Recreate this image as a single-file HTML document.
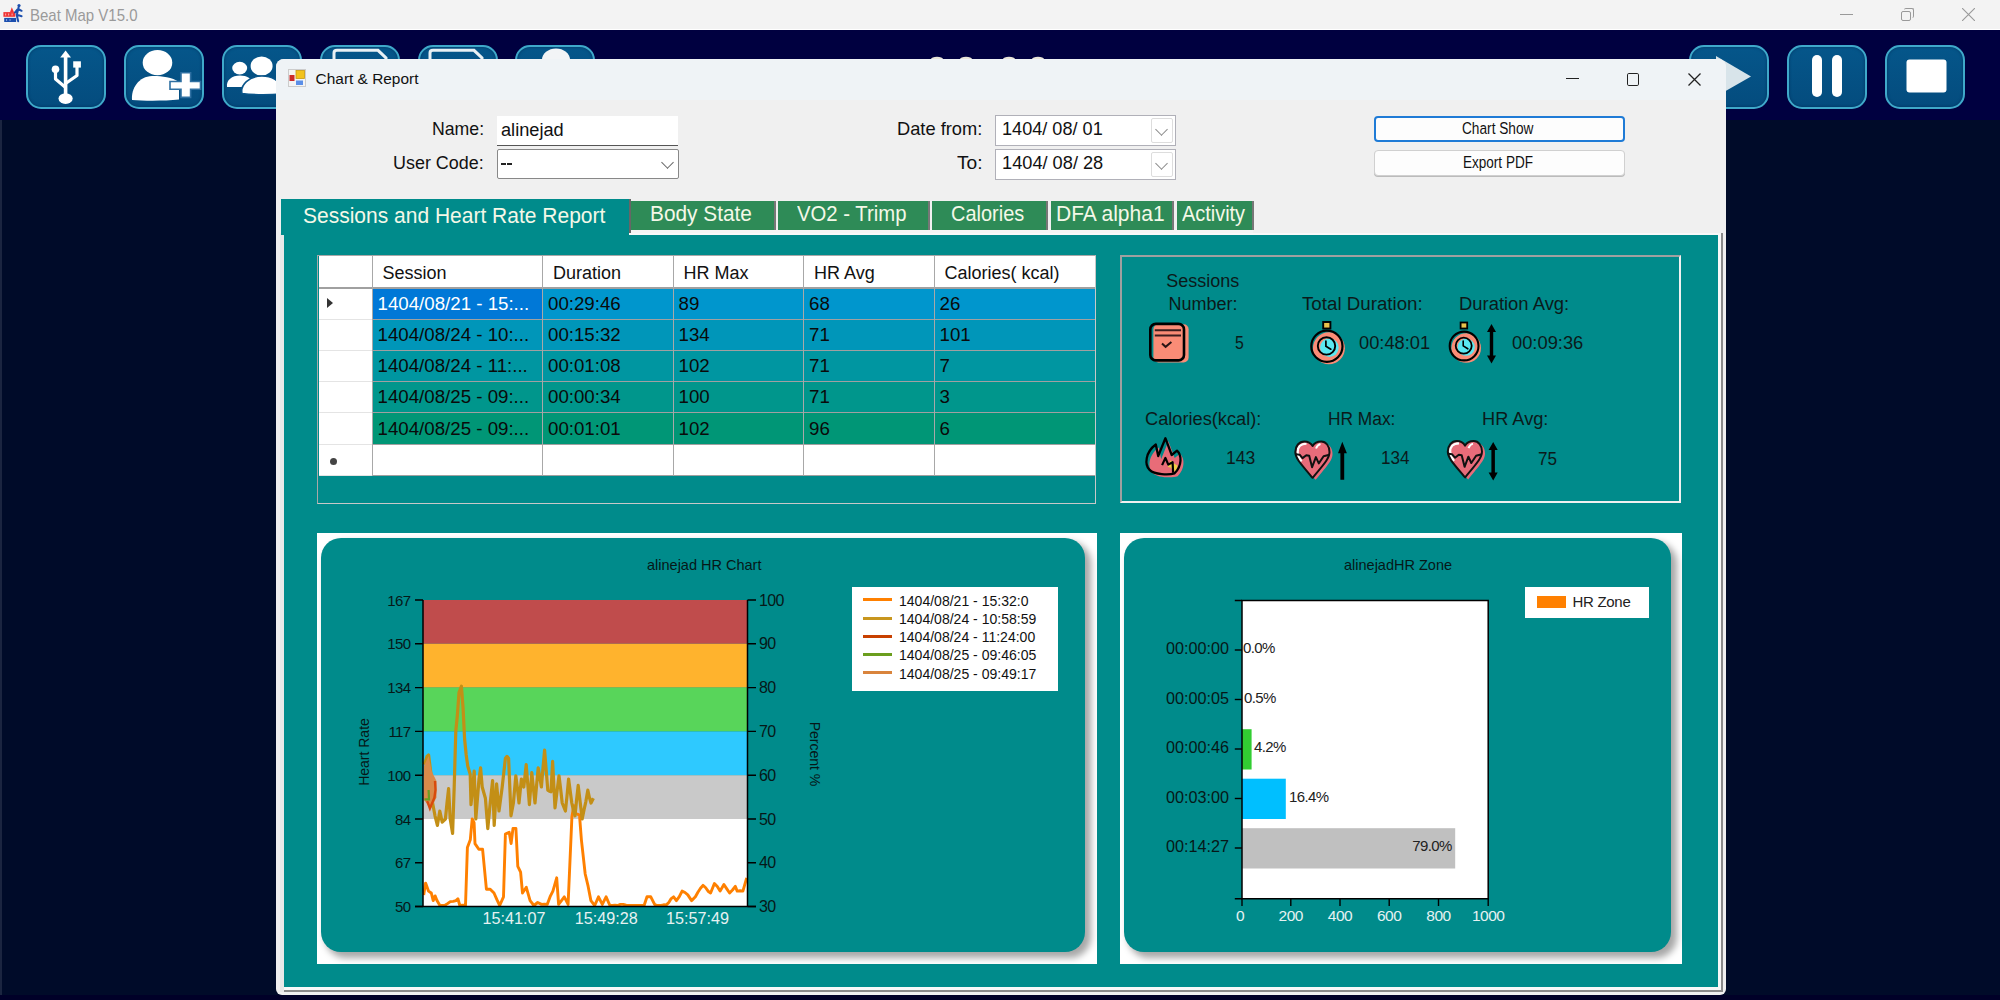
<!DOCTYPE html>
<html><head><meta charset="utf-8">
<style>
*{margin:0;padding:0;box-sizing:border-box}
html,body{width:2000px;height:1000px;overflow:hidden;background:#000b29;font-family:"Liberation Sans",sans-serif}
.a{position:absolute}
.t{position:absolute;white-space:nowrap;line-height:1}
.tb{position:absolute;top:45px;width:80px;height:64px;border:2.6px solid #3fa9ca;border-radius:15px;background:linear-gradient(#05568a,#044c7e);box-shadow:inset 0 0 3px rgba(0,20,60,0.5)}
.box{position:absolute;background:#fff;border:1px solid #b8b8b8}
.chev{position:absolute;width:9px;height:9px;border-right:1.5px solid #555;border-bottom:1.5px solid #555;transform:rotate(45deg)}
.tab{position:absolute;top:201px;height:29px;background:#2e8b57;border-right:2px solid #777}
</style></head><body>

<div class="a" style="left:0;top:0;width:2000px;height:30px;background:#f3f3f3"></div>
<div class="a" style="left:0;top:29px;width:2000px;height:1px;background:#fff"></div>
<div class="t" style="left:29.60px;top:7.14px;font-size:16.14px;color:#9a9a9a;transform:scaleX(0.9295);transform-origin:0 0;">Beat Map V15.0</div>
<svg class="a" style="left:0;top:0" width="26" height="28" viewBox="0 0 26 28">
<rect x="3.4" y="12.1" width="11.9" height="4.7" fill="#f03535"/>
<path d="M10 12.3L11.8 7.2L14 12.3Z" fill="#f03535"/>
<path d="M5 13.5h1.2v2h-1.2zM8 13.5h1.2v2h-1.2zM11.5 13.5h1.2v2h-1.2z" fill="#f6a0a0"/>
<rect x="4.2" y="17.9" width="11.9" height="4.1" fill="#1c4fae"/>
<path d="M6 19h1.1v2h-1.1zM9.5 19h1.1v2h-1.1z" fill="#7d9ad8"/>
<circle cx="19" cy="5.6" r="1.6" fill="#1c4fae"/>
<path d="M18.6 7.2L16.8 15M18.2 9L21.6 10.8M16.8 14.6L21.6 16.2M16.6 14.6L18.2 21.2M17.5 9.5L15 12.5" stroke="#1c4fae" stroke-width="2" fill="none" stroke-linecap="round"/>
</svg>
<div class="a" style="left:1840px;top:14px;width:13px;height:1px;background:#999"></div>
<div class="a" style="left:1901px;top:11px;width:10px;height:10px;border:1px solid #999;border-radius:2px"></div>
<div class="a" style="left:1904px;top:8px;width:10px;height:10px;border-top:1px solid #999;border-right:1px solid #999;border-radius:2px"></div>
<svg class="a" style="left:1962px;top:8px" width="13" height="13"><path d="M0 0L13 13M13 0L0 13" stroke="#999" stroke-width="1.1"/></svg>
<div class="a" style="left:0;top:30px;width:2000px;height:90px;background:#000040"></div>
<div class="a" style="left:0;top:120px;width:1.6px;height:880px;background:#1b2540"></div>
<div class="a" style="left:0;top:995px;width:2000px;height:5px;background:#000028"></div>
<div class="tb" style="left:26px"></div>
<div class="tb" style="left:124px"></div>
<div class="tb" style="left:222px"></div>
<div class="tb" style="left:320px"></div>
<div class="tb" style="left:418px"></div>
<div class="tb" style="left:515px"></div>
<div class="tb" style="left:1689px"></div>
<div class="tb" style="left:1787px"></div>
<div class="tb" style="left:1885px"></div>
<svg class="a" style="left:0;top:30px" width="2000" height="90" viewBox="0 30 2000 90">
<g fill="#fff" stroke="#fff">
<path d="M65.6 50.5L71 57.5H60.2Z" stroke="none"/>
<path d="M65.6 56V97" stroke-width="3.6" fill="none"/>
<ellipse cx="65.6" cy="98.6" rx="7.1" ry="5.3" stroke="none"/>
<circle cx="55.5" cy="69.2" r="3.8" stroke="none"/>
<path d="M55.5 70V79L65.6 87.5" stroke-width="3.2" fill="none" stroke-linejoin="round"/>
<rect x="73.2" y="61.3" width="7.7" height="6.3" stroke="none"/>
<path d="M77 66V75.5L65.6 83.5" stroke-width="3.2" fill="none" stroke-linejoin="round"/>
<ellipse cx="157.5" cy="62.7" rx="14.8" ry="12.6" stroke="none"/>
<path d="M132 100C131 88 139 76.5 152 76C160 75.8 172 77 179 82V99.5C165 101 145 101 132 100Z" stroke="none"/>
<ellipse cx="239.7" cy="68.1" rx="7.5" ry="6.3" stroke="none"/>
<path d="M227 87C226 80 232 75.5 240 75.5C247 75.5 252 79 253 83L252 87Z" stroke="none"/>
<ellipse cx="261.6" cy="66" rx="11" ry="9.6" stroke="none"/>
<path d="M242 93.5C240 85 249 76 262 76C272 76 280 81 282 88V94C268 95 254 95 242 93.5Z" stroke="#0a558a" stroke-width="1.6"/>
</g>
<path d="M170.8 82.3H181.8V73.6H189.8V82.3H199.7V88.4H189.8V96.6H181.8V88.4H170.8Z" fill="#fff" stroke="#2f70a2" stroke-width="3.2" paint-order="stroke"/>
<path d="M334 60V53C334 51 335 50.3 337 50.3H378L386 58V60" fill="none" stroke="#e8f0f4" stroke-width="3"/>
<path d="M430 60V53C430 51 431 50.3 433 50.3H474L482 58V60" fill="none" stroke="#e8f0f4" stroke-width="3"/>
<ellipse cx="556" cy="60" rx="14" ry="11.5" fill="#f2f4f6"/>
<path d="M1716 56L1751 76.4L1716 96.5Z" fill="#d8e4ea"/>
<rect x="1812" y="55" width="10" height="42" rx="5" fill="#fff"/>
<rect x="1832" y="55" width="10" height="42" rx="5" fill="#fff"/>
<rect x="1906.5" y="59.5" width="40" height="33" rx="3" fill="#fff"/>
<ellipse cx="937" cy="59" rx="6" ry="2.2" fill="#e8e4d8"/>
<ellipse cx="966" cy="59" rx="6" ry="2.2" fill="#e8e4d8"/>
<ellipse cx="1009" cy="59" rx="6" ry="2.2" fill="#e8e4d8"/>
<ellipse cx="1038" cy="59" rx="6" ry="2.2" fill="#e8e4d8"/>
</svg>
<div class="a" style="left:276px;top:59px;width:1450px;height:936px;background:#f0f0f0;border-radius:8px 8px 6px 6px"></div>
<div class="a" style="left:276px;top:59px;width:1450px;height:40.5px;background:#eff3f6;border-radius:8px 8px 0 0"></div>
<svg class="a" style="left:288px;top:69px" width="18" height="18" viewBox="0 0 18 18">
<rect x="0.5" y="0.5" width="17" height="17" fill="#f4f4f4" stroke="#ccc"/>
<rect x="8" y="1.5" width="8.5" height="8" fill="#f2c21c" stroke="#c99a10" stroke-width="0.8"/>
<rect x="1.5" y="6" width="5" height="6" fill="#cc2a2a"/>
<rect x="8" y="11.5" width="7" height="4.5" fill="#5b8fe8"/>
</svg>
<div class="t" style="left:315.60px;top:71.34px;font-size:15.43px;color:#111;">Chart &amp; Report</div>
<div class="a" style="left:1566px;top:78px;width:13px;height:1.2px;background:#222"></div>
<div class="a" style="left:1627px;top:73px;width:12.3px;height:12.5px;border:1.4px solid #222;border-radius:1.8px"></div>
<svg class="a" style="left:1688px;top:73px" width="13" height="13"><path d="M0.5 0.5L12.5 12.5M12.5 0.5L0.5 12.5" stroke="#222" stroke-width="1.3"/></svg>
<div class="t" style="left:432.00px;top:120.60px;font-size:17.71px;color:#111;">Name:</div>
<div class="box" style="left:497px;top:116px;width:181px;height:30px;border:none;border-bottom:1.5px solid #555"></div>
<div class="t" style="left:501.00px;top:120.56px;font-size:18.00px;color:#111;transform:scaleX(1.0105);transform-origin:0 0;">alinejad</div>
<div class="t" style="left:393.20px;top:153.80px;font-size:18.43px;color:#111;transform:scaleX(0.9741);transform-origin:0 0;">User Code:</div>
<div class="box" style="left:497px;top:149px;width:182px;height:30px;border:1.5px solid #888;border-radius:2px"></div>
<div class="a" style="left:501px;top:163px;width:5px;height:1.8px;background:#222"></div>
<div class="a" style="left:507px;top:163px;width:5px;height:1.8px;background:#222"></div>
<div class="chev" style="left:663px;top:157.5px;border-color:#666"></div>
<div class="t" style="left:897.00px;top:120.28px;font-size:18.57px;color:#111;transform:scaleX(0.9839);transform-origin:0 0;">Date from:</div>
<div class="t" style="left:956.70px;top:153.58px;font-size:18.57px;color:#111;transform:scaleX(1.0333);transform-origin:0 0;">To:</div>
<div class="box" style="left:995px;top:115px;width:181px;height:31px;border:1.5px solid #b0b0b8"></div>
<div class="box" style="left:1151px;top:118px;width:22px;height:25px;border:1px solid #ddd;border-radius:2px"></div>
<div class="chev" style="left:1156.5px;top:124.5px;width:9px;height:9px;border-color:#8a8a8a;border-width:0 1.7px 1.7px 0"></div>
<div class="t" style="left:1001.70px;top:120.28px;font-size:18.57px;color:#111;transform:scaleX(0.9760);transform-origin:0 0;">1404/ 08/ 01</div>
<div class="box" style="left:995px;top:149px;width:181px;height:31px;border:1.5px solid #b0b0b8"></div>
<div class="box" style="left:1151px;top:152px;width:22px;height:25px;border:1px solid #ddd;border-radius:2px"></div>
<div class="chev" style="left:1156.5px;top:158.5px;width:9px;height:9px;border-color:#8a8a8a;border-width:0 1.7px 1.7px 0"></div>
<div class="t" style="left:1001.70px;top:154.08px;font-size:18.57px;color:#111;transform:scaleX(0.9809);transform-origin:0 0;">1404/ 08/ 28</div>
<div class="box" style="left:1374px;top:116px;width:251px;height:26px;border:2px solid #1f7bd6;border-radius:4px;background:#fdfdfd"></div>
<div class="t" style="left:1462.20px;top:120.49px;font-size:16.43px;color:#111;transform:scaleX(0.8326);transform-origin:0 0;">Chart Show</div>
<div class="box" style="left:1374px;top:150px;width:251px;height:26px;border:1px solid #d0d0d0;border-radius:4px;background:#fdfdfd;box-shadow:0 1px 0 #bbb"></div>
<div class="t" style="left:1463.00px;top:153.69px;font-size:16.43px;color:#111;transform:scaleX(0.8245);transform-origin:0 0;">Export PDF</div>
<div class="a" style="left:629px;top:199px;width:2px;height:34px;background:#666"></div>
<div class="a" style="left:631px;top:229px;width:622px;height:5px;background:#f4f4f4"></div>
<div class="tab" style="left:631px;width:145px"></div>
<div class="t" style="left:650.40px;top:203.42px;font-size:21.71px;color:#f4f8e8;transform:scaleX(0.9602);transform-origin:0 0;">Body State</div>
<div class="tab" style="left:778px;width:152px"></div>
<div class="t" style="left:797.00px;top:203.42px;font-size:21.71px;color:#f4f8e8;transform:scaleX(0.9356);transform-origin:0 0;">VO2 - Trimp</div>
<div class="tab" style="left:932px;width:116px"></div>
<div class="t" style="left:951.20px;top:203.42px;font-size:21.71px;color:#f4f8e8;transform:scaleX(0.9203);transform-origin:0 0;">Calories</div>
<div class="tab" style="left:1051px;width:123px"></div>
<div class="t" style="left:1055.70px;top:203.42px;font-size:21.71px;color:#f4f8e8;transform:scaleX(0.9674);transform-origin:0 0;">DFA alpha1</div>
<div class="tab" style="left:1177px;width:77px"></div>
<div class="t" style="left:1181.80px;top:203.42px;font-size:21.71px;color:#f4f8e8;transform:scaleX(0.9176);transform-origin:0 0;">Activity</div>
<div class="a" style="left:280px;top:233px;width:1443px;height:759px;background:#f8f8f8;border-right:2px solid #8a8a8a;border-bottom:2.5px solid #8a8a8a"></div>
<div class="a" style="left:280px;top:233px;width:4px;height:759px;background:#e8e8e8"></div>
<div class="a" style="left:284px;top:234.8px;width:1434px;height:752.2px;background:#008b8b"></div>
<div class="a" style="left:281.2px;top:199.4px;width:348px;height:36px;background:#008b8b"></div>
<div class="t" style="left:303.00px;top:204.62px;font-size:21.71px;color:#f4f8e8;transform:scaleX(0.9676);transform-origin:0 0;">Sessions and Heart Rate Report</div>
<div class="a" style="left:317px;top:254.5px;width:779px;height:249px;border:1.5px solid #a8a8a8;border-right-color:#c8c8c8;border-bottom-color:#c8c8c8"></div>
<div class="a" style="left:319px;top:256px;width:776px;height:219.5px;background:#fff"></div>
<div class="a" style="left:372px;top:288px;width:723px;height:31.2px;background:#0096cd"></div>
<div class="a" style="left:372px;top:288px;width:170.5px;height:31.2px;background:#0078d7"></div>
<div class="a" style="left:372px;top:319.2px;width:723px;height:31.2px;background:#0096b9"></div>
<div class="a" style="left:372px;top:350.4px;width:723px;height:31.2px;background:#0096a1"></div>
<div class="a" style="left:372px;top:381.6px;width:723px;height:31.2px;background:#00968c"></div>
<div class="a" style="left:372px;top:412.8px;width:723px;height:31.2px;background:#009676"></div>
<div class="a" style="left:319px;top:287px;width:776px;height:1.5px;background:#a0a0a0"></div>
<div class="a" style="left:319px;top:318.7px;width:53px;height:1px;background:#e4e4e4"></div>
<div class="a" style="left:372px;top:318.7px;width:723px;height:1.2px;background:#a0a0a0"></div>
<div class="a" style="left:319px;top:349.9px;width:53px;height:1px;background:#e4e4e4"></div>
<div class="a" style="left:372px;top:349.9px;width:723px;height:1.2px;background:#a0a0a0"></div>
<div class="a" style="left:319px;top:381.1px;width:53px;height:1px;background:#e4e4e4"></div>
<div class="a" style="left:372px;top:381.1px;width:723px;height:1.2px;background:#a0a0a0"></div>
<div class="a" style="left:319px;top:412.3px;width:53px;height:1px;background:#e4e4e4"></div>
<div class="a" style="left:372px;top:412.3px;width:723px;height:1.2px;background:#a0a0a0"></div>
<div class="a" style="left:319px;top:443.5px;width:53px;height:1px;background:#e4e4e4"></div>
<div class="a" style="left:372px;top:443.5px;width:723px;height:1.2px;background:#a0a0a0"></div>
<div class="a" style="left:319px;top:475.0px;width:53px;height:1px;background:#e4e4e4"></div>
<div class="a" style="left:372px;top:475.0px;width:723px;height:1.2px;background:#a0a0a0"></div>
<div class="a" style="left:371.5px;top:256px;width:1.3px;height:219.5px;background:#a8a8a8"></div>
<div class="a" style="left:542.0px;top:256px;width:1.3px;height:219.5px;background:#a8a8a8"></div>
<div class="a" style="left:672.5px;top:256px;width:1.3px;height:219.5px;background:#a8a8a8"></div>
<div class="a" style="left:803.0px;top:256px;width:1.3px;height:219.5px;background:#a8a8a8"></div>
<div class="a" style="left:933.5px;top:256px;width:1.3px;height:219.5px;background:#a8a8a8"></div>
<div class="t" style="left:382.50px;top:264.26px;font-size:18.00px;color:#111;">Session</div>
<div class="t" style="left:553.00px;top:264.26px;font-size:18.00px;color:#111;">Duration</div>
<div class="t" style="left:683.50px;top:264.26px;font-size:18.00px;color:#111;">HR Max</div>
<div class="t" style="left:814.00px;top:264.26px;font-size:18.00px;color:#111;">HR Avg</div>
<div class="t" style="left:944.50px;top:264.26px;font-size:18.00px;color:#111;">Calories( kcal)</div>
<div class="t" style="left:377.50px;top:294.77px;font-size:18.70px;color:#fff;">1404/08/21 - 15:...</div>
<div class="t" style="left:548.00px;top:294.77px;font-size:18.70px;color:#0a0a0a;">00:29:46</div>
<div class="t" style="left:678.50px;top:294.77px;font-size:18.70px;color:#0a0a0a;">89</div>
<div class="t" style="left:809.00px;top:294.77px;font-size:18.70px;color:#0a0a0a;">68</div>
<div class="t" style="left:939.50px;top:294.77px;font-size:18.70px;color:#0a0a0a;">26</div>
<div class="t" style="left:377.50px;top:325.97px;font-size:18.70px;color:#0a0a0a;">1404/08/24 - 10:...</div>
<div class="t" style="left:548.00px;top:325.97px;font-size:18.70px;color:#0a0a0a;">00:15:32</div>
<div class="t" style="left:678.50px;top:325.97px;font-size:18.70px;color:#0a0a0a;">134</div>
<div class="t" style="left:809.00px;top:325.97px;font-size:18.70px;color:#0a0a0a;">71</div>
<div class="t" style="left:939.50px;top:325.97px;font-size:18.70px;color:#0a0a0a;">101</div>
<div class="t" style="left:377.50px;top:357.17px;font-size:18.70px;color:#0a0a0a;">1404/08/24 - 11:...</div>
<div class="t" style="left:548.00px;top:357.17px;font-size:18.70px;color:#0a0a0a;">00:01:08</div>
<div class="t" style="left:678.50px;top:357.17px;font-size:18.70px;color:#0a0a0a;">102</div>
<div class="t" style="left:809.00px;top:357.17px;font-size:18.70px;color:#0a0a0a;">71</div>
<div class="t" style="left:939.50px;top:357.17px;font-size:18.70px;color:#0a0a0a;">7</div>
<div class="t" style="left:377.50px;top:388.37px;font-size:18.70px;color:#0a0a0a;">1404/08/25 - 09:...</div>
<div class="t" style="left:548.00px;top:388.37px;font-size:18.70px;color:#0a0a0a;">00:00:34</div>
<div class="t" style="left:678.50px;top:388.37px;font-size:18.70px;color:#0a0a0a;">100</div>
<div class="t" style="left:809.00px;top:388.37px;font-size:18.70px;color:#0a0a0a;">71</div>
<div class="t" style="left:939.50px;top:388.37px;font-size:18.70px;color:#0a0a0a;">3</div>
<div class="t" style="left:377.50px;top:419.57px;font-size:18.70px;color:#0a0a0a;">1404/08/25 - 09:...</div>
<div class="t" style="left:548.00px;top:419.57px;font-size:18.70px;color:#0a0a0a;">00:01:01</div>
<div class="t" style="left:678.50px;top:419.57px;font-size:18.70px;color:#0a0a0a;">102</div>
<div class="t" style="left:809.00px;top:419.57px;font-size:18.70px;color:#0a0a0a;">96</div>
<div class="t" style="left:939.50px;top:419.57px;font-size:18.70px;color:#0a0a0a;">6</div>
<svg class="a" style="left:326px;top:297px" width="8" height="12"><path d="M1 1L7 6L1 11Z" fill="#333"/></svg>
<div class="a" style="left:330px;top:458px;width:7px;height:7px;border-radius:50%;background:#444"></div>
<div class="a" style="left:1120px;top:254.5px;width:561px;height:248px;border:2px solid #f0f0f0;border-left-color:#a0a0a0;border-top-color:#a0a0a0"></div>
<div class="t" style="left:1166.20px;top:272.26px;font-size:18.00px;color:#0b1a1a;">Sessions</div>
<div class="t" style="left:1168.50px;top:294.96px;font-size:18.00px;color:#0b1a1a;">Number:</div>
<div class="t" style="left:1302.00px;top:294.96px;font-size:18.00px;color:#0b1a1a;transform:scaleX(1.0399);transform-origin:0 0;">Total Duration:</div>
<div class="t" style="left:1459.40px;top:294.96px;font-size:18.00px;color:#0b1a1a;transform:scaleX(1.0229);transform-origin:0 0;">Duration Avg:</div>
<div class="t" style="left:1235.20px;top:333.76px;font-size:18.00px;color:#0b1a1a;transform:scaleX(0.8793);transform-origin:0 0;">5</div>
<div class="t" style="left:1358.90px;top:333.76px;font-size:18.00px;color:#0b1a1a;transform:scaleX(1.0146);transform-origin:0 0;">00:48:01</div>
<div class="t" style="left:1511.70px;top:333.76px;font-size:18.00px;color:#0b1a1a;transform:scaleX(1.0175);transform-origin:0 0;">00:09:36</div>
<div class="t" style="left:1144.70px;top:409.76px;font-size:18.00px;color:#0b1a1a;transform:scaleX(1.0111);transform-origin:0 0;">Calories(kcal):</div>
<div class="t" style="left:1327.60px;top:409.76px;font-size:18.00px;color:#0b1a1a;transform:scaleX(0.9628);transform-origin:0 0;">HR Max:</div>
<div class="t" style="left:1481.60px;top:409.56px;font-size:18.00px;color:#0b1a1a;transform:scaleX(1.0107);transform-origin:0 0;">HR Avg:</div>
<div class="t" style="left:1225.70px;top:449.46px;font-size:18.00px;color:#0b1a1a;transform:scaleX(0.9759);transform-origin:0 0;">143</div>
<div class="t" style="left:1380.90px;top:449.46px;font-size:18.00px;color:#0b1a1a;transform:scaleX(0.9492);transform-origin:0 0;">134</div>
<div class="t" style="left:1538.30px;top:449.76px;font-size:18.00px;color:#0b1a1a;transform:scaleX(0.9492);transform-origin:0 0;">75</div>
<!-- summary icons -->
<svg class="a" style="left:1130px;top:310px" width="420" height="180" viewBox="1130 310 420 180">
<!-- notebook -->
<rect x="1153.4" y="324.2" width="35.2" height="38.2" rx="5" fill="#fa8c76"/>
<rect x="1150.3" y="323.9" width="33.7" height="36.5" rx="5.5" fill="none" stroke="#000" stroke-width="2.6"/>
<path d="M1154.8 330.2H1181M1154.8 335.5H1181" stroke="#3a1f1f" stroke-width="1.9"/>
<path d="M1162 343.4L1165.6 346.8L1171.4 342" stroke="#2a1515" stroke-width="2" fill="none"/>
<!-- stopwatch 1 -->
<circle cx="1328.9" cy="348.3" r="16" fill="#fa8c76"/>
<rect x="1323.2" y="322" width="7.2" height="6.5" fill="#e9c24a" stroke="#000" stroke-width="1.9"/>
<circle cx="1326.9" cy="346.3" r="15.6" fill="none" stroke="#000" stroke-width="2.2"/>
<circle cx="1329.4" cy="347.6" r="9.3" fill="#5ae8f2"/>
<circle cx="1326.5" cy="345.9" r="8.7" fill="none" stroke="#000" stroke-width="1.9"/>
<path d="M1325.9 341.2V346.2L1330.8 349.2" stroke="#000" stroke-width="1.7" fill="none" stroke-linecap="round"/>
<!-- stopwatch 2 -->
<circle cx="1466.2" cy="348" r="14.8" fill="#fa8c76"/>
<rect x="1460.6" y="322.5" width="6.6" height="6" fill="#e9c24a" stroke="#000" stroke-width="1.8"/>
<circle cx="1464.1" cy="346" r="14.4" fill="none" stroke="#000" stroke-width="2.1"/>
<circle cx="1466.2" cy="347.2" r="8.6" fill="#5ae8f2"/>
<circle cx="1463.7" cy="345.7" r="8" fill="none" stroke="#000" stroke-width="1.8"/>
<path d="M1463.2 341V345.9L1467.8 348.8" stroke="#000" stroke-width="1.6" fill="none" stroke-linecap="round"/>
<path d="M1491.5 324L1496 332H1493.2V355.5H1496L1491.5 363.5L1487 355.5H1489.8V332H1487Z" fill="#000"/>
<!-- fire -->
<path d="M1158.8 447.5 L1161.2 459 L1168.4 441.2 L1174.7 458 L1180 453.7 C1184.8 458 1185.3 468.6 1177.6 476.3 C1171.8 478.2 1157.4 477.7 1152.6 472.9 C1147.3 467.6 1148.3 455.2 1158.8 447.5 Z" fill="#e86c78"/>
<path d="M1170.7 460.3L1173.6 463.2L1177.4 465.6L1176.5 470.4L1173.6 471.8L1170.7 467.5L1167.8 467Z" fill="#efcf45"/>
<path d="M1155.8 444.5 L1158.2 456 L1165.4 438.2 L1171.7 455 L1177 450.7 C1181.8 455 1182.3 465.6 1174.6 473.3 C1168.8 475.2 1154.4 474.7 1149.6 469.9 C1144.3 464.6 1145.3 452.2 1155.8 444.5 Z" fill="none" stroke="#000" stroke-width="2.3" stroke-linejoin="round"/>
<path d="M1162.1 465.1L1165.4 457.9L1168.3 464.6L1172.6 462.2L1173.1 472.8" fill="none" stroke="#000" stroke-width="2.2" stroke-linejoin="round"/>
<!-- heart 1 -->
<path d="M1315.6 448 C1313 444 1310 443.5 1307.4 443.5 C1302 443.5 1298.3 448 1298.3 454 C1298.3 460 1303 465 1315.6 479.8 C1328 465 1332.5 460 1332.5 454 C1332.5 448 1329 443.5 1324.2 443.5 C1321 443.5 1318 444 1315.6 448 Z" fill="#e86c7a"/>
<path d="M1312.6 446 C1310 442 1307 441.5 1304.4 441.5 C1299 441.5 1295.3 446 1295.3 452 C1295.3 458 1300 463 1312.6 477.8 C1325 463 1329.5 458 1329.5 452 C1329.5 446 1326 441.5 1321.2 441.5 C1318 441.5 1315 442 1312.6 446 Z" fill="#e86c7a"/>
<path d="M1306.5 443.6 C1301 443.6 1297.6 447 1297.6 452 C1297.6 455.5 1299 458.5 1301.5 461.5" stroke="#fff" stroke-width="2.4" fill="none"/>
<path d="M1316 448.5 C1317 446 1318.5 444.5 1320.5 444" stroke="#fff" stroke-width="2" fill="none"/>
<path d="M1312.6 446 C1310 442 1307 441.5 1304.4 441.5 C1299 441.5 1295.3 446 1295.3 452 C1295.3 458 1300 463 1312.6 477.8 C1325 463 1329.5 458 1329.5 452 C1329.5 446 1326 441.5 1321.2 441.5 C1318 441.5 1315 442 1312.6 446 Z" fill="none" stroke="#111" stroke-width="2" stroke-linejoin="round"/>
<path d="M1295.8 454.2L1299.6 454.7L1302.5 458.1L1306.3 455.2L1309.2 455.7L1312.1 467.2L1315.9 457.1L1318.8 463.4L1323.6 456.2L1329.4 454.7" fill="none" stroke="#111" stroke-width="2" stroke-linejoin="round"/>
<path d="M1342.3 441.8L1346.9 453.3H1344.2V479.7H1340.4V453.3H1338Z" fill="#000"/>
<!-- heart 2 -->
<g transform="translate(152.5,-0.4)">
<path d="M1315.6 448 C1313 444 1310 443.5 1307.4 443.5 C1302 443.5 1298.3 448 1298.3 454 C1298.3 460 1303 465 1315.6 479.8 C1328 465 1332.5 460 1332.5 454 C1332.5 448 1329 443.5 1324.2 443.5 C1321 443.5 1318 444 1315.6 448 Z" fill="#e86c7a"/>
<path d="M1312.6 446 C1310 442 1307 441.5 1304.4 441.5 C1299 441.5 1295.3 446 1295.3 452 C1295.3 458 1300 463 1312.6 477.8 C1325 463 1329.5 458 1329.5 452 C1329.5 446 1326 441.5 1321.2 441.5 C1318 441.5 1315 442 1312.6 446 Z" fill="#e86c7a"/>
<path d="M1306.5 443.6 C1301 443.6 1297.6 447 1297.6 452 C1297.6 455.5 1299 458.5 1301.5 461.5" stroke="#fff" stroke-width="2.4" fill="none"/>
<path d="M1316 448.5 C1317 446 1318.5 444.5 1320.5 444" stroke="#fff" stroke-width="2" fill="none"/>
<path d="M1312.6 446 C1310 442 1307 441.5 1304.4 441.5 C1299 441.5 1295.3 446 1295.3 452 C1295.3 458 1300 463 1312.6 477.8 C1325 463 1329.5 458 1329.5 452 C1329.5 446 1326 441.5 1321.2 441.5 C1318 441.5 1315 442 1312.6 446 Z" fill="none" stroke="#111" stroke-width="2" stroke-linejoin="round"/>
<path d="M1295.8 454.2L1299.6 454.7L1302.5 458.1L1306.3 455.2L1309.2 455.7L1312.1 467.2L1315.9 457.1L1318.8 463.4L1323.6 456.2L1329.4 454.7" fill="none" stroke="#111" stroke-width="2" stroke-linejoin="round"/>
</g>
<path d="M1493.2 442L1497.7 450H1494.9V472.5H1497.7L1493.2 480.4L1488.6 472.5H1491.4V450H1488.6Z" fill="#000"/>
</svg>

<!-- chart1 -->
<div class="a" style="left:317px;top:533px;width:779.5px;height:430.5px;background:#fff"></div>
<div class="a" style="left:320.5px;top:537.5px;width:764.5px;height:414.5px;background:#008b8b;border-radius:20px;box-shadow:5px 5px 7px 1px rgba(0,0,0,0.35)"></div>
<svg class="a" style="left:317px;top:533px" width="780" height="431" viewBox="317 533 780 431">
<rect x="423" y="600" width="324.5" height="43.799999999999955" fill="#c04c4c"/>
<rect x="423" y="643.8" width="324.5" height="43.80000000000007" fill="#ffb32d"/>
<rect x="423" y="687.6" width="324.5" height="43.89999999999998" fill="#58d55a"/>
<rect x="423" y="731.5" width="324.5" height="43.700000000000045" fill="#2ec9ff"/>
<rect x="423" y="775.2" width="324.5" height="43.799999999999955" fill="#c9c9c9"/>
<rect x="423" y="819" width="324.5" height="87.5" fill="#ffffff"/>
<polyline points="423.7,894.9 425.6,883.1 428.5,891.1 431.3,893.0 433.2,900.6 435.1,895.9 437.0,900.6 439.9,905.5 442.2,905.5 444.6,905.5 447.5,903.6 450.3,901.6 453.2,901.4 456.0,900.6 457.9,898.7 459.8,905.5 462.7,905.3 465.5,905.5 467.4,847.4 470.3,839.8 472.2,818.9 474.1,822.7 475.0,843.6 478.8,849.3 482.6,849.3 486.4,889.2 490.2,889.2 494.0,893.0 496.9,899.7 499.7,905.5 503.5,896.8 505.4,834.1 509.2,832.2 511.1,843.6 513.0,828.4 515.9,828.4 517.8,866.4 520.6,872.1 522.5,893.0 526.3,887.3 530.1,900.6 533.9,905.5 537.7,902.5 541.5,904.4 544.4,904.1 547.2,904.4 550.1,896.7 552.9,891.1 556.7,877.8 558.6,904.4 561.5,900.6 564.3,896.8 568.1,904.4 571.9,817.0 573.8,805.6 575.7,813.2 579.5,815.1 581.4,839.8 585.2,874.0 588.1,886.2 590.9,900.6 594.7,905.5 598.5,896.8 602.3,904.4 606.1,896.8 609.9,905.5 612.4,905.5 615.0,905.3 617.5,905.5 620.4,904.4 623.2,904.4 626.1,905.2 628.9,905.5 631.4,905.5 634.0,905.4 636.5,905.5 639.0,905.5 641.6,905.5 644.1,905.5 647.0,896.8 650.8,896.8 654.6,904.4 656.8,905.5 659.0,905.5 661.2,905.5 663.7,904.8 666.3,904.9 668.8,902.5 671.2,898.6 673.6,896.8 676.4,900.6 679.3,896.7 682.1,891.1 685.0,892.5 687.8,894.9 691.6,900.6 695.4,896.8 697.9,892.2 700.5,888.3 703.0,885.4 705.5,887.5 708.1,891.2 710.6,893.0 714.4,883.5 717.3,886.5 720.1,891.1 723.9,884.5 726.8,888.9 729.6,893.0 732.5,890.0 735.3,886.4 737.2,891.1 740.1,890.8 742.9,891.1 746.7,877.8" fill="none" stroke="#ff8000" stroke-width="2.9" stroke-linejoin="round"/>
<polyline points="423.8,764.6 425.4,761.6 427.0,756.5 428.6,755.0 431.0,774.2 432.6,803.0 435.0,815.8 437.4,825.4 439.8,811.0 442.2,822.2 445.4,819.0 447.0,803.0 448.6,788.6 450.2,819.0 452.6,833.4 454.2,787.0 455.8,731.0 457.4,715.0 459.0,692.6 461.4,686.2 463.0,707.0 464.6,739.0 466.2,755.0 467.8,766.2 470.2,774.2 471.0,804.6 474.2,771.0 475.8,819.0 479.0,779.0 480.6,767.8 482.2,787.0 485.4,798.2 487.8,828.6 490.2,803.0 492.6,780.6 494.2,825.4 496.6,783.8 499.0,811.0 502.2,787.0 505.4,758.2 507.0,756.4 508.6,758.2 511.0,815.8 513.4,803.0 515.8,775.8 517.4,788.2 519.0,803.0 521.4,779.0 523.8,787.0 526.2,764.6 529.4,804.6 531.8,772.6 533.4,788.5 535.0,803.0 536.6,785.1 538.2,767.8 541.4,787.0 543.0,767.9 544.6,750.2 547.8,790.2 549.4,791.3 551.0,791.8 552.6,761.4 555.0,807.8 557.0,791.6 559.0,775.8 560.6,788.6 562.2,803.0 565.4,811.0 567.0,796.2 568.6,779.0 571.8,803.0 573.4,810.2 575.0,815.8 576.6,799.6 578.2,785.4 580.2,802.5 582.2,819.0 584.1,809.5 585.9,801.3 587.8,790.2 589.4,797.5 591.0,803.0 593.4,798.2" fill="none" stroke="#c38f16" stroke-width="3.2" stroke-linejoin="round"/>
<path d="M424 766 L428.6 756 L432 772 L436.5 781 L436.5 797.6 L430.8 808.4 L424 800Z" fill="#d98a4a"/>
<polyline points="435,781 435.5,790 434.4,797.6 429.9,808.4 427.2,801.2" fill="none" stroke="#d84a0c" stroke-width="2.4"/>
<polyline points="428.6,790 429,799.4 424.5,799.4" fill="none" stroke="#6a9e20" stroke-width="2.2"/>
<path d="M423 600V906.5M747.5 600V906.5M415 906.5H756" stroke="#000" stroke-width="1.5" fill="none"/>
<path d="M415 600H423M747.5 600H756" stroke="#000" stroke-width="1.4"/>
<path d="M415 643.8H423M747.5 643.8H756" stroke="#000" stroke-width="1.4"/>
<path d="M415 687.6H423M747.5 687.6H756" stroke="#000" stroke-width="1.4"/>
<path d="M415 731.4H423M747.5 731.4H756" stroke="#000" stroke-width="1.4"/>
<path d="M415 775.2H423M747.5 775.2H756" stroke="#000" stroke-width="1.4"/>
<path d="M415 819H423M747.5 819H756" stroke="#000" stroke-width="1.4"/>
<path d="M415 862.8H423M747.5 862.8H756" stroke="#000" stroke-width="1.4"/>
<path d="M415 906.5H423M747.5 906.5H756" stroke="#000" stroke-width="1.4"/>
</svg>
<div class="t" style="left:350px;width:60.5px;text-align:right;top:592.5px;font-size:15px;color:#061818;letter-spacing:-0.6px">167</div>
<div class="t" style="left:759px;top:592.5px;font-size:16px;color:#061818;letter-spacing:-0.6px">100</div>
<div class="t" style="left:350px;width:60.5px;text-align:right;top:636.3px;font-size:15px;color:#061818;letter-spacing:-0.6px">150</div>
<div class="t" style="left:759px;top:636.3px;font-size:16px;color:#061818;letter-spacing:-0.6px">90</div>
<div class="t" style="left:350px;width:60.5px;text-align:right;top:680.1px;font-size:15px;color:#061818;letter-spacing:-0.6px">134</div>
<div class="t" style="left:759px;top:680.1px;font-size:16px;color:#061818;letter-spacing:-0.6px">80</div>
<div class="t" style="left:350px;width:60.5px;text-align:right;top:723.9px;font-size:15px;color:#061818;letter-spacing:-0.6px">117</div>
<div class="t" style="left:759px;top:723.9px;font-size:16px;color:#061818;letter-spacing:-0.6px">70</div>
<div class="t" style="left:350px;width:60.5px;text-align:right;top:767.7px;font-size:15px;color:#061818;letter-spacing:-0.6px">100</div>
<div class="t" style="left:759px;top:767.7px;font-size:16px;color:#061818;letter-spacing:-0.6px">60</div>
<div class="t" style="left:350px;width:60.5px;text-align:right;top:811.5px;font-size:15px;color:#061818;letter-spacing:-0.6px">84</div>
<div class="t" style="left:759px;top:811.5px;font-size:16px;color:#061818;letter-spacing:-0.6px">50</div>
<div class="t" style="left:350px;width:60.5px;text-align:right;top:855.3px;font-size:15px;color:#061818;letter-spacing:-0.6px">67</div>
<div class="t" style="left:759px;top:855.3px;font-size:16px;color:#061818;letter-spacing:-0.6px">40</div>
<div class="t" style="left:350px;width:60.5px;text-align:right;top:899.0px;font-size:15px;color:#061818;letter-spacing:-0.6px">50</div>
<div class="t" style="left:759px;top:899.0px;font-size:16px;color:#061818;letter-spacing:-0.6px">30</div>
<div class="t" style="left:647px;top:558px;font-size:14.5px;color:#061818">alinejad HR Chart</div>
<div class="t" style="left:482.6px;top:910px;font-size:16.2px;color:#e6f2f2">15:41:07</div>
<div class="t" style="left:574.8px;top:910px;font-size:16.2px;color:#e6f2f2">15:49:28</div>
<div class="t" style="left:666px;top:910px;font-size:16.2px;color:#e6f2f2">15:57:49</div>
<div class="t" style="left:330px;top:745px;width:68px;text-align:center;font-size:14px;color:#061818;transform:rotate(-90deg);transform-origin:34px 7px;margin-left:0">Heart Rate</div>
<div class="t" style="left:781px;top:747px;width:68px;text-align:center;font-size:14px;color:#061818;transform:rotate(90deg);transform-origin:34px 7px">Percent %</div>
<div class="a" style="left:851.5px;top:587px;width:206px;height:104px;background:#fff"></div>
<div class="a" style="left:863px;top:598.3px;width:29px;height:3px;background:#ff8000"></div>
<div class="t" style="left:899px;top:592.8px;font-size:15px;color:#111;transform:scaleX(0.935);transform-origin:0 0">1404/08/21 - 15:32:0</div>
<div class="a" style="left:863px;top:616.5px;width:29px;height:3px;background:#c8961e"></div>
<div class="t" style="left:899px;top:611.0px;font-size:15px;color:#111;transform:scaleX(0.935);transform-origin:0 0">1404/08/24 - 10:58:59</div>
<div class="a" style="left:863px;top:634.6999999999999px;width:29px;height:3px;background:#c84000"></div>
<div class="t" style="left:899px;top:629.1999999999999px;font-size:15px;color:#111;transform:scaleX(0.935);transform-origin:0 0">1404/08/24 - 11:24:00</div>
<div class="a" style="left:863px;top:652.9px;width:29px;height:3px;background:#6b9e1e"></div>
<div class="t" style="left:899px;top:647.4px;font-size:15px;color:#111;transform:scaleX(0.935);transform-origin:0 0">1404/08/25 - 09:46:05</div>
<div class="a" style="left:863px;top:671.0999999999999px;width:29px;height:3px;background:#d9843c"></div>
<div class="t" style="left:899px;top:665.5999999999999px;font-size:15px;color:#111;transform:scaleX(0.935);transform-origin:0 0">1404/08/25 - 09:49:17</div>

<!-- chart2 -->
<div class="a" style="left:1119.5px;top:533px;width:562px;height:430.5px;background:#fff"></div>
<div class="a" style="left:1124px;top:537.5px;width:546.5px;height:414.5px;background:#008b8b;border-radius:20px;box-shadow:5px 5px 7px 1px rgba(0,0,0,0.35)"></div>
<div class="t" style="left:1344px;top:558px;font-size:14.5px;color:#061818">alinejadHR Zone</div>
<svg class="a" style="left:1119px;top:533px" width="563" height="431" viewBox="1119 533 563 431">
<rect x="1242" y="600.5" width="246.2" height="298.2" fill="#fff"/>
<rect x="1242" y="729.2" width="9.6" height="40.3" fill="#32cd32"/>
<rect x="1242" y="778.7" width="43.8" height="40.3" fill="#00bfff"/>
<rect x="1242" y="828.2" width="213.2" height="40.3" fill="#c0c0c0"/>
<path d="M1242 600.5H1488.2V898.7H1242Z" fill="none" stroke="#000" stroke-width="1.5"/>
<path d="M1234.8 600.5H1242M1234.8 898.7H1242" stroke="#000" stroke-width="1.4"/>
<path d="M1234.8 650H1242" stroke="#000" stroke-width="1.4"/>
<path d="M1234.8 699.5H1242" stroke="#000" stroke-width="1.4"/>
<path d="M1234.8 749H1242" stroke="#000" stroke-width="1.4"/>
<path d="M1234.8 798.5H1242" stroke="#000" stroke-width="1.4"/>
<path d="M1234.8 848H1242" stroke="#000" stroke-width="1.4"/>
<path d="M1242 898.7V906" stroke="#000" stroke-width="1.4"/>
<path d="M1290.8 898.7V906" stroke="#000" stroke-width="1.4"/>
<path d="M1340 898.7V906" stroke="#000" stroke-width="1.4"/>
<path d="M1389.2 898.7V906" stroke="#000" stroke-width="1.4"/>
<path d="M1438.5 898.7V906" stroke="#000" stroke-width="1.4"/>
<path d="M1488.2 898.7V906" stroke="#000" stroke-width="1.4"/>
</svg>
<div class="t" style="left:1166px;top:640.4px;font-size:16.2px;color:#061818;letter-spacing:0px">00:00:00</div>
<div class="t" style="left:1166px;top:689.9px;font-size:16.2px;color:#061818;letter-spacing:0px">00:00:05</div>
<div class="t" style="left:1166px;top:739.4px;font-size:16.2px;color:#061818;letter-spacing:0px">00:00:46</div>
<div class="t" style="left:1166px;top:788.9px;font-size:16.2px;color:#061818;letter-spacing:0px">00:03:00</div>
<div class="t" style="left:1166px;top:838.4px;font-size:16.2px;color:#061818;letter-spacing:0px">00:14:27</div>
<div class="t" style="left:1200px;width:80px;text-align:center;top:908px;font-size:15.5px;color:#e6f2f2;letter-spacing:-0.5px">0</div>
<div class="t" style="left:1250.8px;width:80px;text-align:center;top:908px;font-size:15.5px;color:#e6f2f2;letter-spacing:-0.5px">200</div>
<div class="t" style="left:1300px;width:80px;text-align:center;top:908px;font-size:15.5px;color:#e6f2f2;letter-spacing:-0.5px">400</div>
<div class="t" style="left:1349.2px;width:80px;text-align:center;top:908px;font-size:15.5px;color:#e6f2f2;letter-spacing:-0.5px">600</div>
<div class="t" style="left:1398.5px;width:80px;text-align:center;top:908px;font-size:15.5px;color:#e6f2f2;letter-spacing:-0.5px">800</div>
<div class="t" style="left:1448.2px;width:80px;text-align:center;top:908px;font-size:15.5px;color:#e6f2f2;letter-spacing:-0.5px">1000</div>
<div class="t" style="left:1243px;top:640.2px;font-size:15px;color:#222;letter-spacing:-0.6px">0.0%</div>
<div class="t" style="left:1244px;top:689.7px;font-size:15px;color:#222;letter-spacing:-0.6px">0.5%</div>
<div class="t" style="left:1254px;top:739.2px;font-size:15px;color:#222;letter-spacing:-0.6px">4.2%</div>
<div class="t" style="left:1289px;top:788.7px;font-size:15px;color:#222;letter-spacing:-0.6px">16.4%</div>
<div class="t" style="left:1412.3px;top:838.2px;font-size:15px;color:#222;letter-spacing:-0.6px">79.0%</div>
<div class="a" style="left:1525px;top:587px;width:124px;height:31px;background:#fff"></div>
<div class="a" style="left:1537px;top:596.4px;width:29px;height:11.6px;background:#ff8000"></div>
<div class="t" style="left:1572.5px;top:593.8px;font-size:15px;color:#222;letter-spacing:-0.3px">HR Zone</div>

</body></html>
